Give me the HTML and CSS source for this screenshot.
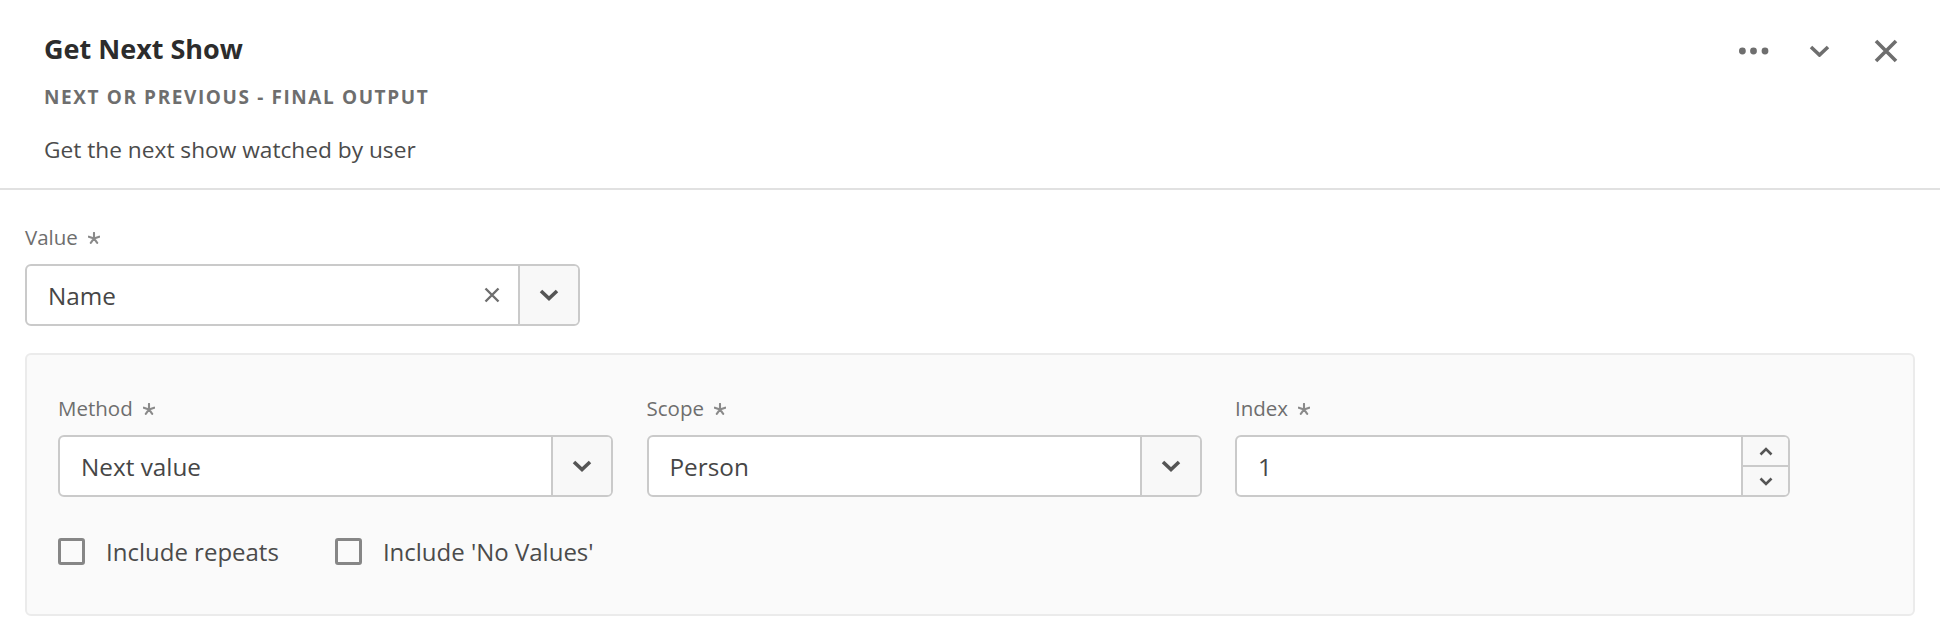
FILE: index.html
```html
<!DOCTYPE html>
<html lang="en">
<head>
<meta charset="utf-8">
<title>Get Next Show</title>
<link rel="stylesheet" href="styles.css">
</head>
<body>
<div class="card">
  <header class="head">
    <div class="head-text">
      <h1 class="title">Get Next Show</h1>
      <div class="subtitle">NEXT OR PREVIOUS - FINAL OUTPUT</div>
      <p class="desc">Get the next show watched by user</p>
    </div>
    <div class="head-actions">
      <span class="act act-dots">
        <svg width="30" height="8" viewBox="0 0 30 8"><circle cx="3.4" cy="4" r="3.4"/><circle cx="14.5" cy="4" r="3.4"/><circle cx="26" cy="4" r="3.4"/></svg>
      </span>
      <span class="act act-chev">
        <svg width="21" height="12" viewBox="0 0 21 12"><path d="M2 2 L10.5 10 L19 2" fill="none" stroke-width="3.6" stroke-linejoin="miter"/></svg>
      </span>
      <span class="act act-close">
        <svg width="24" height="24" viewBox="0 0 24 24"><path d="M2 2 L22 22 M22 2 L2 22" fill="none" stroke-width="3.6"/></svg>
      </span>
    </div>
  </header>

  <section class="body">
    <div class="field">
      <div class="label">Value<svg class="req" width="12" height="12" viewBox="0 0 12 12"><path d="M6 6.4 L6 0.9 M6 6.4 L11.2 4.7 M6 6.4 L9.2 10.8 M6 6.4 L2.8 10.8 M6 6.4 L0.8 4.7"/></svg></div>
      <div class="combo combo-wide">
        <span class="combo-text">Name</span>
        <span class="clear">
          <svg width="16" height="16" viewBox="0 0 16 16"><path d="M1.5 1.5 L14.5 14.5 M14.5 1.5 L1.5 14.5" fill="none" stroke-width="2.4"/></svg>
        </span>
        <span class="combo-btn">
          <svg class="chev" width="20" height="12" viewBox="0 0 20 12"><path d="M2 2 L10 9.5 L18 2" fill="none" stroke-width="3.6"/></svg>
        </span>
      </div>
    </div>

    <div class="panel">
      <div class="row">
        <div class="field">
          <div class="label">Method<svg class="req" width="12" height="12" viewBox="0 0 12 12"><path d="M6 6.4 L6 0.9 M6 6.4 L11.2 4.7 M6 6.4 L9.2 10.8 M6 6.4 L2.8 10.8 M6 6.4 L0.8 4.7"/></svg></div>
          <div class="combo">
            <span class="combo-text">Next value</span>
            <span class="combo-btn">
              <svg class="chev" width="20" height="12" viewBox="0 0 20 12"><path d="M2 2 L10 9.5 L18 2" fill="none" stroke-width="3.6"/></svg>
            </span>
          </div>
        </div>
        <div class="field">
          <div class="label">Scope<svg class="req" width="12" height="12" viewBox="0 0 12 12"><path d="M6 6.4 L6 0.9 M6 6.4 L11.2 4.7 M6 6.4 L9.2 10.8 M6 6.4 L2.8 10.8 M6 6.4 L0.8 4.7"/></svg></div>
          <div class="combo">
            <span class="combo-text">Person</span>
            <span class="combo-btn">
              <svg class="chev" width="20" height="12" viewBox="0 0 20 12"><path d="M2 2 L10 9.5 L18 2" fill="none" stroke-width="3.6"/></svg>
            </span>
          </div>
        </div>
        <div class="field">
          <div class="label">Index<svg class="req" width="12" height="12" viewBox="0 0 12 12"><path d="M6 6.4 L6 0.9 M6 6.4 L11.2 4.7 M6 6.4 L9.2 10.8 M6 6.4 L2.8 10.8 M6 6.4 L0.8 4.7"/></svg></div>
          <div class="combo">
            <span class="combo-text">1</span>
            <span class="stepper">
              <span class="step step-up">
                <svg width="14" height="9" viewBox="0 0 14 9"><path d="M1.5 7.5 L7 2 L12.5 7.5" fill="none" stroke-width="2.6"/></svg>
              </span>
              <span class="step">
                <svg width="14" height="9" viewBox="0 0 14 9"><path d="M1.5 1.5 L7 7 L12.5 1.5" fill="none" stroke-width="2.6"/></svg>
              </span>
            </span>
          </div>
        </div>
      </div>
      <div class="checks">
        <label class="check"><span class="box"></span><span class="check-text">Include repeats</span></label>
        <label class="check"><span class="box"></span><span class="check-text">Include 'No Values'</span></label>
      </div>
    </div>
  </section>
</div>
</body>
</html>
```

FILE: styles.css
```css
* { box-sizing: border-box; }

body {
  margin: 0;
  background: #ffffff;
  font-family: "Open Sans", Lato, sans-serif;
  color: #4b4b4b;
}

.card {
  width: 1940px;
}

.head {
  display: flex;
  justify-content: space-between;
  align-items: flex-start;
  height: 190px;
  padding: 31px 0 0 44px;
  border-bottom: 2px solid #e1e1e1;
}

.title {
  margin: 0;
  font-size: 27px;
  line-height: 36px;
  font-weight: 700;
  color: #2c2c2c;
}

.subtitle {
  margin-top: 18px;
  font-size: 19px;
  line-height: 24px;
  font-weight: 700;
  letter-spacing: 1.6px;
  color: #6e6e6e;
}

.desc {
  margin: 27px 0 0;
  font-size: 22.7px;
  line-height: 28px;
  color: #4b4b4b;
}

.head-actions {
  display: flex;
  align-items: center;
  margin-top: 2px;
  padding-right: 36px;
}

.act {
  display: flex;
  align-items: center;
  justify-content: center;
  width: 36px;
  height: 36px;
  fill: #6e6e6e;
  stroke: #6e6e6e;
}

.act-dots svg { stroke: none; }

.act-chev { margin-left: 29px; }
.act-close { margin-left: 31px; }

.body {
  padding: 0 25px;
}

.field {
  width: 555px;
  flex: none;
}

.body > .field {
  margin-top: 35px;
}

.label {
  font-size: 20.5px;
  line-height: 24px;
  color: #6e6e6e;
  margin-bottom: 15px;
  white-space: nowrap;
}

.req {
  margin-left: 10px;
  vertical-align: 1px;
  fill: none;
  stroke: #8a8a8a;
  stroke-width: 2.1;
  stroke-linecap: round;
}

.combo {
  display: flex;
  align-items: stretch;
  height: 62px;
  background: #ffffff;
  border: 2px solid #cacaca;
  border-radius: 6px;
}

.combo-text {
  flex: 1;
  display: flex;
  align-items: center;
  padding-left: 21px;
  font-size: 24.3px;
  color: #464646;
}

.clear {
  display: flex;
  align-items: center;
  justify-content: center;
  width: 36px;
  margin-right: 8px;
  stroke: #6e6e6e;
}

.combo-btn {
  display: flex;
  align-items: center;
  justify-content: center;
  width: 60px;
  background: #f8f8f8;
  border-left: 2px solid #cacaca;
  border-radius: 0 4px 4px 0;
  stroke: #555555;
}

.stepper {
  display: flex;
  flex-direction: column;
  width: 47px;
  background: #f8f8f8;
  border-left: 2px solid #cacaca;
  border-radius: 0 4px 4px 0;
  stroke: #555555;
}

.step {
  flex: 1;
  display: flex;
  align-items: center;
  justify-content: center;
}

.step-up {
  border-bottom: 2px solid #cacaca;
}

.panel {
  margin-top: 27px;
  height: 263px;
  padding: 41px 31px 0;
  background: #fafafa;
  border: 2px solid #ebebeb;
  border-radius: 6px;
}

.row {
  display: flex;
  gap: 33.5px;
}

.checks {
  display: flex;
  align-items: center;
  margin-top: 39px;
  gap: 56px;
}

.check {
  display: flex;
  align-items: center;
  height: 30px;
}

.box {
  width: 27px;
  height: 27px;
  border: 3px solid #868686;
  border-radius: 3px;
}

.check-text {
  margin-left: 21px;
  font-size: 24px;
  color: #4b4b4b;
}
```
